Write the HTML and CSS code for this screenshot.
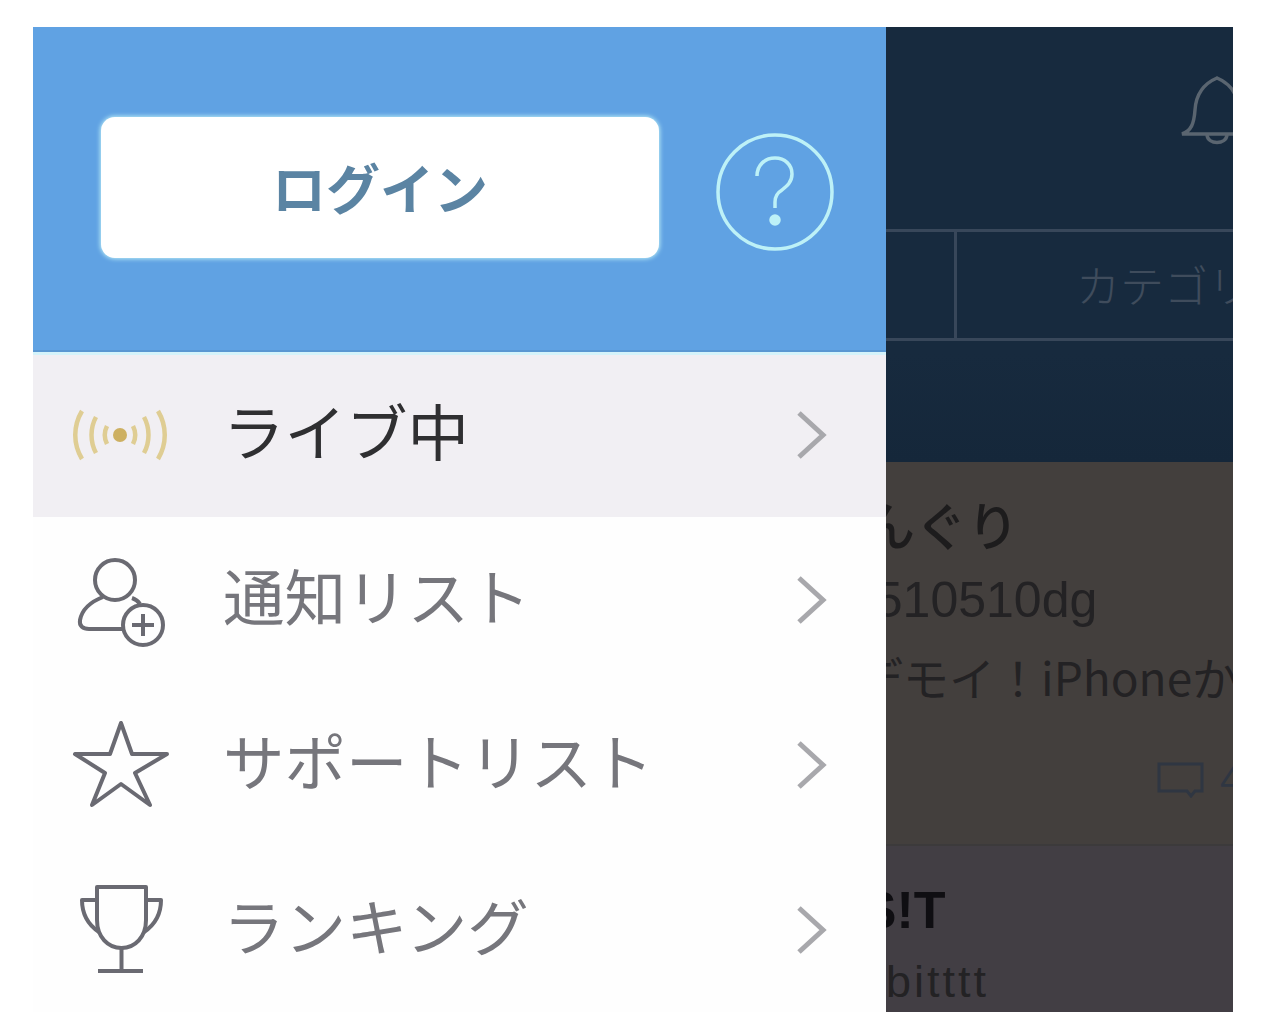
FILE: index.html
```html
<!DOCTYPE html>
<html lang="ja">

<head>
	<meta charset="UTF-8">
	<title>メニュー</title>
	<link rel="stylesheet" href="styles.css">
</head>

<body>
	<main id="screen">
		<!-- app behind the drawer, dimmed -->
		<div id="app">
			<div id="appHead">
				<div id="bellRow">
					<svg class="bell" width="76" height="72" viewBox="0 0 76 72">
						<path d="M3 60c9-3 12-10 13-24 1-16 8-26 22-32 14 6 21 16 22 32 1 14 4 21 13 24z" />
						<path d="M28 61c1 10 19 10 20 0" />
					</svg>
				</div>
				<div id="tabs">
					<div class="tab"></div>
					<div class="tab tabWide">カテゴリ</div>
				</div>
			</div>
			<div class="post">
				<div class="postName">どんぐり</div>
				<div class="postId">donguri510510dg</div>
				<div class="postText">デモイ！iPhoneから投稿</div>
				<div class="postMeta">
					<svg width="48" height="36" viewBox="0 0 48 36">
						<path d="M2 2h43v27h-7l-4 5-4-5H2z" />
					</svg>
					<span>4</span>
				</div>
			</div>
			<div class="post postNext">
				<div class="postName postBold">BITS!T</div>
				<div class="postId">rabbitttt</div>
			</div>
		</div>

		<nav id="drawer">
			<div id="drawerHead">
				<div id="loginBtn">ログイン</div>
				<svg id="helpIcon" width="120" height="120" viewBox="0 0 120 120">
					<circle cx="60" cy="60" r="57" />
					<path d="M42 44c0-11 8-18 18-18s17 7 17 16c0 8-5 12-10 16-5 3-7 7-7 12v6" />
					<circle class="dot" cx="60" cy="88" r="4" />
				</svg>
			</div>
			<div class="row rowActive">
				<svg class="rowIcon" width="100" height="60" viewBox="0 0 100 60">
					<g class="live">
						<path d="M12 6c-9 15-9 33 0 48M88 6c9 15 9 33 0 48" />
						<path d="M26 12c-6 11-6 25 0 36M74 12c6 11 6 25 0 36" />
						<path d="M37 21c-3 6-3 12 0 18M63 21c3 6 3 12 0 18" />
					</g>
					<circle class="liveDot" cx="50" cy="30" r="7" />
				</svg>
				<span class="rowLabel">ライブ中</span>
				<svg class="chevron" width="32" height="50" viewBox="0 0 32 50">
					<path d="M4 3l24 22L4 47" />
				</svg>
			</div>
			<div class="row">
				<svg class="rowIcon" width="100" height="100" viewBox="0 0 100 100">
					<circle cx="45" cy="30" r="20" />
					<path d="M33 47C20 52 12 60 10 70c-1 6 3 9 9 9h36" />
					<path d="M62 48c3 1 6 3 8 6" />
					<circle cx="73" cy="75" r="20" />
					<path d="M73 64v22M62 75h22" />
				</svg>
				<span class="rowLabel">通知リスト</span>
				<svg class="chevron" width="32" height="50" viewBox="0 0 32 50">
					<path d="M4 3l24 22L4 47" />
				</svg>
			</div>
			<div class="row">
				<svg class="rowIcon" width="100" height="100" viewBox="0 0 100 100">
					<path d="M51 8l11 31h35L65 58l15 32-29-21-29 21 13-32L5 39h35z" />
				</svg>
				<span class="rowLabel">サポートリスト</span>
				<svg class="chevron" width="32" height="50" viewBox="0 0 32 50">
					<path d="M4 3l24 22L4 47" />
				</svg>
			</div>
			<div class="row">
				<svg class="rowIcon" width="100" height="100" viewBox="0 0 100 100">
					<path d="M27 7h49v33c0 17-11 28-24.500 28S27 57 27 40z" />
					<path d="M27 20H12c0 14 5 24 17 32M76 20h15c0 14-5 24-17 32" />
					<path d="M51.500 68v23M28 91h45" />
				</svg>
				<span class="rowLabel">ランキング</span>
				<svg class="chevron" width="32" height="50" viewBox="0 0 32 50">
					<path d="M4 3l24 22L4 47" />
				</svg>
			</div>
		</nav>
	</main>
</body>

</html>
```

FILE: styles.css
```css
* {
	margin: 0;
	padding: 0;
	box-sizing: border-box;
}

html,
body {
	height: 1012px;
	overflow: hidden;
	background-color: white;
}

body {
	padding: 27px 47px 0 33px;
	font-family: "Noto Sans CJK JP", "Noto Sans", sans-serif;
}

svg {
	display: block;
	fill: none;
	flex: none;
}

#screen {
	position: relative;
	width: 1200px;
	height: 985px;
	overflow: hidden;
}

/* app behind */
#app {
	height: 100%;
	background-color: #423e44;
}

#appHead {
	height: 435px;
	background-image: linear-gradient(#172a3e 75%, #15273a);
}

#bellRow {
	height: 202px;
	display: flex;
	justify-content: flex-end;
	padding-top: 47px;
	margin-right: -22px;
}

.bell path {
	stroke: #5a6570;
	stroke-width: 3.5;
}

#tabs {
	height: 112px;
	display: flex;
	border-top: 3px solid #38475a;
	border-bottom: 3px solid #38475a;
}

.tab {
	flex: none;
	width: 924px;
	border-right: 3px solid #38475a;
}

.tabWide {
	width: 400px;
	border-right: none;
	padding-left: 119px;
	font-size: 44px;
	font-weight: 300;
	line-height: 104px;
	color: #3f4c5c;
	white-space: nowrap;
}

.post {
	height: 384px;
	padding: 24px 0 0 778px;
	background-color: #433f3d;
	border-bottom: 2px solid #3c3a3b;
	white-space: nowrap;
	color: #1d1c1d;
}

.postNext {
	height: auto;
	padding-top: 26px;
	padding-left: 745px;
	background-color: #423e44;
	border-bottom: none;
}

.postName {
	font-size: 52px;
	font-weight: 500;
	line-height: 76px;
}

.postBold {
	font-family: "Liberation Sans", sans-serif;
	font-weight: 700;
	color: #0f0e12;
}

.postId {
	font-family: "Liberation Sans", sans-serif;
	font-size: 50px;
	line-height: 76px;
	color: #232224;
	margin-left: -103px;
}

.postNext .postId {
	margin: 4px 0 0 34px;
	font-size: 45px;
	line-height: 60px;
	letter-spacing: 3px;
}

.postText {
	font-size: 46px;
	line-height: 76px;
	margin-left: 46px;
	color: #232224;
}

.postMeta {
	display: flex;
	align-items: center;
	gap: 15px;
	margin: 43px 0 0 346px;
	color: #2f3642;
	font-family: "Liberation Sans", sans-serif;
	font-size: 40px;
}

.postMeta path {
	stroke: #2f3642;
	stroke-width: 3;
}

/* drawer */
#drawer {
	position: absolute;
	top: 0;
	left: 0;
	width: 853px;
	height: 100%;
	background-color: #fefefe;
}

#drawerHead {
	position: relative;
	z-index: 1;
	height: 325px;
	display: flex;
	align-items: flex-start;
	padding: 90px 0 0 68px;
	background-color: #60a2e3;
	border-bottom: 2px solid #5a97d2;
	box-shadow: 0 3px 0 #d5f3fa;
}

#loginBtn {
	flex: none;
	width: 558px;
	height: 141px;
	border-radius: 14px;
	background-color: white;
	box-shadow: 0 0 4px 1px #b8ebf6;
	text-align: center;
	font-size: 54px;
	font-weight: 700;
	line-height: 139px;
	color: #5b84a3;
}

#helpIcon {
	margin: 15px 0 0 56px;
}

#helpIcon circle,
#helpIcon path {
	stroke: #bdf1f7;
	stroke-width: 3.5;
}

#helpIcon .dot {
	fill: #bdf1f7;
}

.row {
	height: 165px;
	display: flex;
	align-items: center;
	padding-left: 37px;
}

.rowActive {
	background-color: #f1eff3;
}

.rowIcon {
	stroke: #6a6a72;
	stroke-width: 4;
}

.rowIcon path,
.rowIcon circle {
	stroke-linejoin: round;
}

.live path {
	stroke: #dfcd93;
	stroke-width: 4.5;
}

.liveDot {
	fill: #cdb062;
	stroke: none;
}

.rowLabel {
	flex: 1;
	padding-left: 53px;
	margin-bottom: 10px;
	font-size: 61.5px;
	line-height: 1;
	color: #76767c;
	white-space: nowrap;
}

.rowActive .rowLabel {
	color: #2f2f31;
}

.chevron {
	margin-right: 59px;
}

.chevron path {
	stroke: #a8a8ac;
	stroke-width: 5;
}
```
